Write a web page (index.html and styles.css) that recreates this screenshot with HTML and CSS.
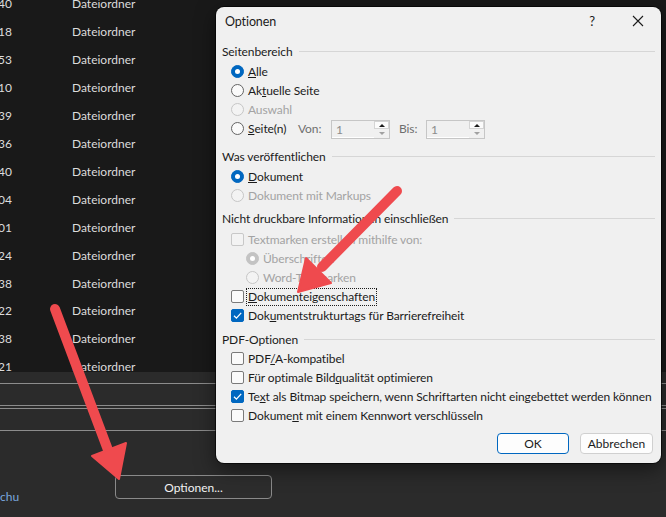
FILE: index.html
```html
<!DOCTYPE html>
<html lang="de">
<head>
  <meta charset="UTF-8" />
  <title>Optionen</title>
  <link rel="stylesheet" href="styles.css">
</head>
<body>
  <div class="screen">
    <!-- file list behind the dialog -->
    <div class="file-list">
      <div class="file-row"><span class="file-time">40</span><span>Dateiordner</span></div>
      <div class="file-row"><span class="file-time">18</span><span>Dateiordner</span></div>
      <div class="file-row"><span class="file-time">53</span><span>Dateiordner</span></div>
      <div class="file-row"><span class="file-time">10</span><span>Dateiordner</span></div>
      <div class="file-row"><span class="file-time">39</span><span>Dateiordner</span></div>
      <div class="file-row"><span class="file-time">36</span><span>Dateiordner</span></div>
      <div class="file-row"><span class="file-time">40</span><span>Dateiordner</span></div>
      <div class="file-row"><span class="file-time">04</span><span>Dateiordner</span></div>
      <div class="file-row"><span class="file-time">01</span><span>Dateiordner</span></div>
      <div class="file-row"><span class="file-time">24</span><span>Dateiordner</span></div>
      <div class="file-row"><span class="file-time">38</span><span>Dateiordner</span></div>
      <div class="file-row"><span class="file-time">22</span><span>Dateiordner</span></div>
      <div class="file-row"><span class="file-time">38</span><span>Dateiordner</span></div>
      <div class="file-row"><span class="file-time">21</span><span>Dateiordner</span></div>
    </div>

    <div class="save-area">
      <div class="field-line"></div>
      <div class="field-line gap-wide"></div>
      <div class="field-line gap-narrow"></div>
      <div class="field-line gap-wide"></div>
      <div class="save-footer">
        <span class="save-link">chu</span>
        <button class="options-btn">Optionen...</button>
      </div>
    </div>

    <!-- Optionen dialog -->
    <div class="dialog">
      <div class="dialog-title">
        <span class="title-text">Optionen</span>
        <span class="title-btn">?</span>
        <span class="title-btn">
          <svg width="12" height="12" viewBox="0 0 12 12"><path d="M1 1 L11 11 M11 1 L1 11" stroke="#1b1b1b" stroke-width="1.1" fill="none"/></svg>
        </span>
      </div>

      <div class="dialog-body">
        <div class="group group-range">
          <div class="group-head"><span>Seitenbereich</span><span class="head-line"></span></div>
          <div class="opt"><span class="radio checked"></span><span class="label"><u>A</u>lle</span></div>
          <div class="opt"><span class="radio"></span><span class="label">Ak<u>t</u>uelle Seite</span></div>
          <div class="opt disabled"><span class="radio"></span><span class="label">Auswahl</span></div>
          <div class="opt">
            <span class="radio"></span><span class="label label-pages"><u>S</u>eite(n)</span>
            <span class="spin-label">Von:</span>
            <span class="spin"><span class="spin-val">1</span><span class="spin-btns"><span class="spin-up"></span><span class="spin-down"></span></span></span>
            <span class="spin-label spin-label-to">Bis:</span>
            <span class="spin"><span class="spin-val">1</span><span class="spin-btns"><span class="spin-up"></span><span class="spin-down"></span></span></span>
          </div>
        </div>

        <div class="group group-publish">
          <div class="group-head"><span>Was veröffentlichen</span><span class="head-line"></span></div>
          <div class="opt"><span class="radio checked"></span><span class="label"><u>D</u>okument</span></div>
          <div class="opt disabled"><span class="radio"></span><span class="label">Dokument mit Markups</span></div>
        </div>

        <div class="group group-info">
          <div class="group-head"><span>Nicht druckbare Informationen einschließen</span><span class="head-line"></span></div>
          <div class="opt disabled"><span class="check"></span><span class="label">Textmarken erstellen mithilfe von:</span></div>
          <div class="opt disabled sub"><span class="radio checked"></span><span class="label">Überschriften</span></div>
          <div class="opt disabled sub"><span class="radio"></span><span class="label">Word-Textmarken</span></div>
          <div class="opt"><span class="check"></span><span class="label focused"><u>D</u>okumenteigenschaften</span></div>
          <div class="opt"><span class="check checked"><svg width="11" height="11" viewBox="0 0 11 11"><path d="M2 5.8 L4.4 8.1 L9.2 2.9" stroke="#fff" stroke-width="1.3" fill="none"/></svg></span><span class="label">Dok<u>u</u>mentstrukturtags für Barrierefreiheit</span></div>
        </div>

        <div class="group group-pdf">
          <div class="group-head"><span>PDF-Optionen</span><span class="head-line"></span></div>
          <div class="opt"><span class="check"></span><span class="label">PDF<u>/</u>A-kompatibel</span></div>
          <div class="opt"><span class="check"></span><span class="label">Für optimale Bild<u>q</u>ualität optimieren</span></div>
          <div class="opt"><span class="check checked"><svg width="11" height="11" viewBox="0 0 11 11"><path d="M2 5.8 L4.4 8.1 L9.2 2.9" stroke="#fff" stroke-width="1.3" fill="none"/></svg></span><span class="label">Te<u>x</u>t als Bitmap speichern, wenn Schriftarten nicht eingebettet werden können</span></div>
          <div class="opt"><span class="check"></span><span class="label">Dokume<u>n</u>t mit einem Kennwort verschlüsseln</span></div>
        </div>

        <div class="dialog-buttons">
          <button class="btn btn-ok">OK</button>
          <button class="btn btn-cancel">Abbrechen</button>
        </div>
      </div>
    </div>

    <!-- red annotation arrows -->
    <svg class="arrows" width="666" height="517" viewBox="0 0 666 517">
      <g fill="#ef4a4e" stroke="#ef4a4e" stroke-linejoin="round">
        <line x1="55" y1="309" x2="108" y2="450" stroke-width="10" stroke-linecap="round"/>
        <polygon points="92,456 126,443 119,479" stroke-width="2"/>
        <line x1="397" y1="191" x2="322" y2="267" stroke-width="10" stroke-linecap="round"/>
        <polygon points="306,258 331,283 298,292" stroke-width="2"/>
      </g>
    </svg>
  </div>
</body>
</html>
```

FILE: styles.css
```css
* {
  box-sizing: border-box;
  margin: 0;
  padding: 0;
}

body {
  width: 666px;
  height: 517px;
  overflow: hidden;
  background: #2b2b2b;
  font-family: Lato, "Noto Sans", sans-serif;
  font-size: 12px;
}

.screen {
  position: relative;
  width: 666px;
  height: 517px;
  overflow: hidden;
}

/* background explorer list */
.file-list {
  height: 382px;
  margin-top: -10px;
  background: #191919;
  color: #dcdcdc;
  overflow: hidden;
}

.file-row {
  display: flex;
  align-items: center;
  height: 27.92px;
}

.file-time {
  width: 74px;
  margin-left: -2px;
}

.save-area {
  padding-top: 11px;
}

.field-line {
  height: 1px;
  background: #8c8c8c;
}

.gap-wide {
  margin-top: 21px;
}

.gap-narrow {
  margin-top: 2px;
}

.save-footer {
  display: flex;
  align-items: flex-start;
  margin-top: 44px;
}

.save-link {
  width: 115px;
  margin-top: 14px;
  line-height: 16px;
  color: #7aa7dd;
}

.options-btn {
  width: 157px;
  height: 24px;
  border: 1px solid #8a8a8a;
  border-radius: 4px;
  background: #2d2d2d;
  color: #f2f2f2;
  font-family: inherit;
  font-size: 12px;
}

/* dialog */
.dialog {
  position: absolute;
  left: 216px;
  top: 7px;
  width: 445px;
  height: 456px;
  background: #f0f0f0;
  border-radius: 8px;
  box-shadow: 0 0 0 1px rgba(0, 0, 0, 0.6), 0 6px 20px rgba(0, 0, 0, 0.5);
  color: #1b1b1b;
  letter-spacing: -0.1px;
  white-space: nowrap;
}

.dialog-title {
  display: flex;
  align-items: center;
  height: 28px;
  padding-left: 9px;
}

.title-text {
  flex: 1;
  font-size: 12.5px;
}

.title-btn {
  display: flex;
  align-items: center;
  justify-content: center;
  width: 46px;
  height: 28px;
  font-size: 13px;
}

.dialog-body {
  padding: 6px 6px 0 6px;
}

.group-head {
  display: flex;
  align-items: center;
  height: 20px;
}

.head-line {
  flex: 1;
  height: 1px;
  margin-left: 6px;
  background: #d6d6d6;
}

.group-range .group-head,
.group-publish .group-head {
  margin-bottom: 1px;
}

.group-info .group-head {
  margin-bottom: 2px;
}

.group-publish {
  margin-top: 8px;
}

.group-info {
  margin-top: 3px;
}

.group-pdf {
  margin-top: 4px;
}

.opt {
  display: flex;
  align-items: center;
  height: 19px;
  padding-left: 9px;
}

.opt.sub {
  padding-left: 24px;
}

.opt .label {
  margin-left: 4px;
}

.opt.disabled {
  color: #a3a3a3;
}

.radio {
  position: relative;
  flex: none;
  width: 13px;
  height: 13px;
  border: 1px solid #646464;
  border-radius: 50%;
  background: #fafafa;
}

.radio.checked {
  border-color: #0067c0;
  background: #0067c0;
}

.radio.checked::after {
  content: "";
  position: absolute;
  left: 3px;
  top: 3px;
  width: 5px;
  height: 5px;
  border-radius: 50%;
  background: #fff;
}

.disabled .radio {
  border-color: #c6c6c6;
  background: #f3f3f3;
}

.disabled .radio.checked {
  border-color: #c3c3c3;
  background: #c3c3c3;
}

.check {
  display: flex;
  align-items: center;
  justify-content: center;
  flex: none;
  width: 13px;
  height: 13px;
  border: 1px solid #7a7a7a;
  border-radius: 2px;
  background: #fafafa;
}

.check.checked {
  border-color: #0067c0;
  background: #0067c0;
}

.disabled .check {
  border-color: #c8c8c8;
  background: #f3f3f3;
}

.label.focused {
  margin-left: 3px;
  padding: 0 1px;
  outline: 1px dotted #1b1b1b;
  line-height: 16px;
}

.label-pages {
  width: 50px;
}

.spin-label {
  width: 33px;
  color: #6e6e6e;
}

.spin-label-to {
  width: 27px;
  margin-left: 9px;
}

.spin {
  display: flex;
  width: 59px;
  height: 19px;
  margin-top: 2px;
  border: 1px solid #c6c6c6;
  background: #f0f0f0;
}

.spin-val {
  flex: 1;
  padding-left: 4px;
  line-height: 17px;
  color: #8c8c8c;
  border-bottom: 1px solid #fff;
}

.spin-btns {
  display: flex;
  flex-direction: column;
  width: 15px;
}

.spin-up,
.spin-down {
  display: flex;
  align-items: center;
  justify-content: center;
  height: 8px;
}

.spin-up {
  border: 1px solid #d4d4d4;
  background: #fbfbfb;
}

.spin-up::after {
  content: "";
  border-left: 3px solid transparent;
  border-right: 3px solid transparent;
  border-bottom: 3px solid #1b1b1b;
}

.spin-down {
  height: 9px;
}

.spin-down::after {
  content: "";
  border-left: 3px solid transparent;
  border-right: 3px solid transparent;
  border-top: 3px solid #a0a0a0;
}

.dialog-buttons {
  display: flex;
  justify-content: flex-end;
  gap: 11px;
  margin-top: 8px;
  padding-right: 2px;
}

.btn {
  height: 21px;
  border: 1px solid #d0d0d0;
  border-radius: 4px;
  background: #fdfdfd;
  color: #1b1b1b;
  font-family: inherit;
  font-size: 12px;
  letter-spacing: 0;
}

.btn-ok {
  width: 72px;
  border-color: #0067c0;
}

.btn-cancel {
  width: 73px;
}

.arrows {
  position: absolute;
  left: 0;
  top: 0;
  pointer-events: none;
}
```
